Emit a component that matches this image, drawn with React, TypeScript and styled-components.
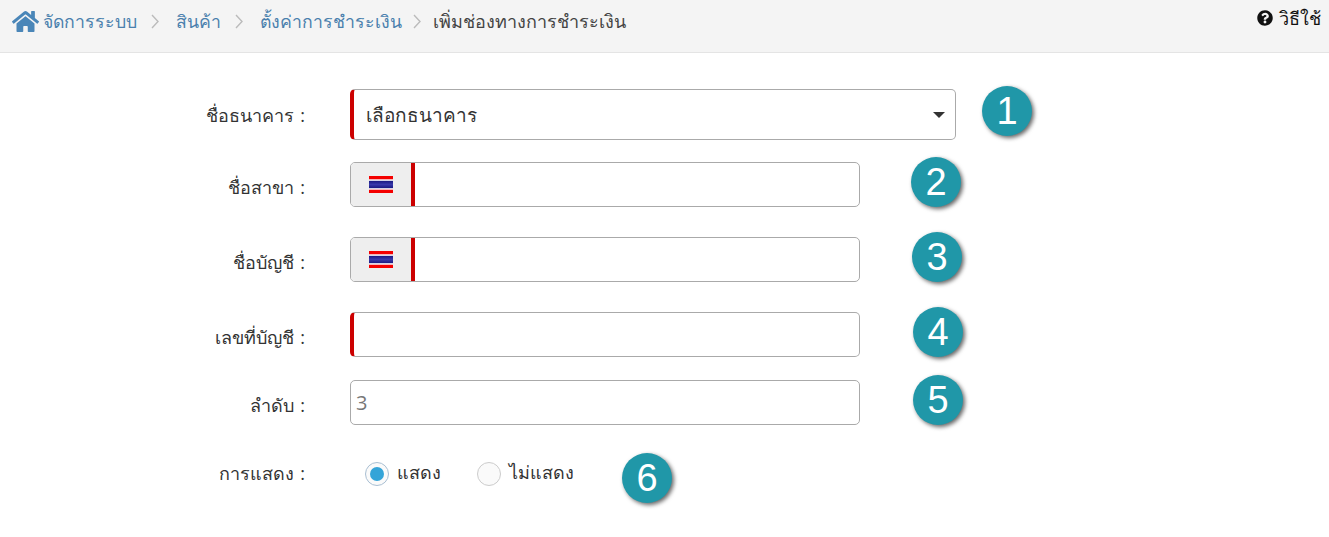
import * as React from 'react';
import styled, { createGlobalStyle } from 'styled-components';
import { FaHome, FaQuestionCircle } from 'react-icons/fa';

const GlobalStyle = createGlobalStyle`
  html, body {
    margin: 0;
    padding: 0;
    background: #fff;
    font-family: "Open Sans", "Noto Sans", Arial, sans-serif;
    color: #333;
  }
`;

const TopBar = styled.div`
  height: 52px;
  background: #f4f4f4;
  border-bottom: 1px solid #e4e4e4;
  display: flex;
  justify-content: space-between;
  padding: 0 8px 0 12px;
`;

const Crumbs = styled.div`
  display: flex;
  align-items: center;
  height: 43px;
  font-size: 17.7px;
`;

const CrumbLink = styled.span`
  color: #4a80ad;
`;

const CrumbCurrent = styled.span`
  color: #444;
  font-size: 18px;
`;

const Separator = styled.span<{ $tight?: boolean }>`
  display: flex;
  align-items: center;
  margin: 0 ${({ $tight }) => ($tight ? 12 : 17)}px 0 ${({ $tight }) => ($tight ? 11 : 14)}px;
`;

const HomeIcon = styled(FaHome)`
  color: #4a86b8;
  font-size: 27px;
  margin-right: 4px;
`;

const Help = styled.div`
  display: flex;
  align-items: center;
  gap: 6px;
  height: 36px;
  font-size: 18px;
  color: #111;
`;

const Form = styled.div`
  padding-top: 36px;
  padding-bottom: 33px;
`;

const Row = styled.div<{ $top: number; $height: number }>`
  display: flex;
  align-items: center;
  margin-top: ${({ $top }) => $top}px;
  height: ${({ $height }) => $height}px;
`;

const Label = styled.div<{ $drop?: number }>`
  width: 305px;
  margin-right: 45px;
  padding-top: ${({ $drop }) => $drop ?? 0}px;
  box-sizing: border-box;
  text-align: right;
  font-size: 18px;
  word-spacing: 2px;
  color: #333;
  flex: none;
`;

const LabelUp = styled(Label)`
  padding-bottom: 10px;
`;

const Select = styled.div`
  box-sizing: border-box;
  width: 606px;
  height: 100%;
  border: 1px solid #aaa;
  border-left: 4px solid #c00;
  border-radius: 5px;
  display: flex;
  align-items: center;
  justify-content: space-between;
  padding: 0 10px 0 12px;
  font-size: 19px;
  color: #333;
`;

const Caret = styled.span`
  width: 0;
  height: 0;
  border-left: 6px solid transparent;
  border-right: 6px solid transparent;
  border-top: 6px solid #333;
`;

const Group = styled.div<{ $required?: boolean }>`
  box-sizing: border-box;
  width: 510px;
  height: 100%;
  border: 1px solid #aaa;
  border-left: ${({ $required }) => ($required ? '4px solid #c00' : '1px solid #aaa')};
  border-radius: 5px;
  display: flex;
  overflow: hidden;
`;

const Addon = styled.div`
  width: 60px;
  background: #eee;
  display: flex;
  align-items: center;
  justify-content: center;
`;

const Input = styled.div<{ $required?: boolean }>`
  flex: 1;
  display: flex;
  align-items: center;
  padding-left: 5px;
  padding-bottom: 1px;
  border-left: ${({ $required }) => ($required ? '4px solid #c00' : 'none')};
  font-size: 20px;
  color: #777;
`;

const Badge = styled.div<{ $gap: number; $lift: number }>`
  flex: none;
  width: 50px;
  height: 50px;
  margin-left: ${({ $gap }) => $gap}px;
  margin-bottom: ${({ $lift }) => $lift}px;
  border-radius: 50%;
  background: #2097a8;
  color: #fff;
  font-family: "Liberation Sans", Arial, sans-serif;
  font-size: 38px;
  display: flex;
  align-items: center;
  justify-content: center;
  box-shadow: 2px 2px 4px rgba(0, 0, 0, 0.6);
`;

const RadioWrap = styled.div`
  display: flex;
  align-items: center;
  padding-left: 15px;
  padding-bottom: 8px;
  font-size: 18px;
`;

const RadioCircle = styled.span<{ $checked?: boolean }>`
  box-sizing: border-box;
  width: 24px;
  height: 24px;
  border-radius: 50%;
  border: 1px solid ${({ $checked }) => ($checked ? '#a9bfd3' : '#ccc')};
  background: #fafafa;
  display: flex;
  align-items: center;
  justify-content: center;
  margin-right: 8px;
  &::after {
    content: '';
    display: ${({ $checked }) => ($checked ? 'block' : 'none')};
    width: 14px;
    height: 14px;
    border-radius: 50%;
    background: #34a4d8;
  }
`;

const RadioText = styled.span`
  margin-right: 36px;
  padding-bottom: 3px;
  color: #333;
`;

const Flag = () => (
  <svg width="24" height="17" viewBox="0 0 24 17">
    <defs>
      <linearGradient id="thai-flag" x1="0" y1="0" x2="0" y2="1">
        <stop offset="0.15" stopColor="#f40000" />
        <stop offset="0.21" stopColor="#f9c4c8" />
        <stop offset="0.26" stopColor="#e8e8f2" />
        <stop offset="0.31" stopColor="#1c1c86" />
        <stop offset="0.5" stopColor="#3838aa" />
        <stop offset="0.69" stopColor="#1c1c86" />
        <stop offset="0.74" stopColor="#e8e8f2" />
        <stop offset="0.79" stopColor="#f9c4c8" />
        <stop offset="0.85" stopColor="#f40000" />
      </linearGradient>
    </defs>
    <rect width="24" height="17" fill="url(#thai-flag)" />
  </svg>
);

const Chevron = ({ tight }: { tight?: boolean }) => (
  <Separator $tight={tight}>
    <svg width="8" height="15" viewBox="0 0 8 15" fill="none" stroke="#bbb" strokeWidth="1.4">
      <path d="M1 1 L7 7.5 L1 14" />
    </svg>
  </Separator>
);

export default function App() {
  return (
    <>
      <GlobalStyle />
      <TopBar>
        <Crumbs>
          <HomeIcon />
          <CrumbLink>จัดการระบบ</CrumbLink>
          <Chevron />
          <CrumbLink>สินค้า</CrumbLink>
          <Chevron />
          <CrumbLink>ตั้งค่าการชำระเงิน</CrumbLink>
          <Chevron tight />
          <CrumbCurrent>เพิ่มช่องทางการชำระเงิน</CrumbCurrent>
        </Crumbs>
        <Help>
          <FaQuestionCircle size={16} />
          วิธีใช้
        </Help>
      </TopBar>
      <Form>
        <Row $top={0} $height={51}>
          <Label $drop={2}>ชื่อธนาคาร :</Label>
          <Select>
            เลือกธนาคาร
            <Caret />
          </Select>
          <Badge $gap={26} $lift={7}>1</Badge>
        </Row>
        <Row $top={22} $height={45}>
          <Label $drop={6}>ชื่อสาขา :</Label>
          <Group>
            <Addon><Flag /></Addon>
            <Input $required />
          </Group>
          <Badge $gap={51} $lift={5}>2</Badge>
        </Row>
        <Row $top={30} $height={45}>
          <Label $drop={6}>ชื่อบัญชี :</Label>
          <Group>
            <Addon><Flag /></Addon>
            <Input $required />
          </Group>
          <Badge $gap={52} $lift={5}>3</Badge>
        </Row>
        <Row $top={30} $height={45}>
          <Label $drop={6}>เลขที่บัญชี :</Label>
          <Group $required />
          <Badge $gap={53} $lift={5}>4</Badge>
        </Row>
        <Row $top={23} $height={45}>
          <Label $drop={6}>ลำดับ :</Label>
          <Group>
            <Input>3</Input>
          </Group>
          <Badge $gap={53} $lift={5}>5</Badge>
        </Row>
        <Row $top={27} $height={52}>
          <LabelUp>การแสดง :</LabelUp>
          <RadioWrap>
            <RadioCircle $checked />
            <RadioText>แสดง</RadioText>
            <RadioCircle />
            <RadioText>ไม่แสดง</RadioText>
          </RadioWrap>
          <Badge $gap={12} $lift={0}>6</Badge>
        </Row>
      </Form>
    </>
  );
}
